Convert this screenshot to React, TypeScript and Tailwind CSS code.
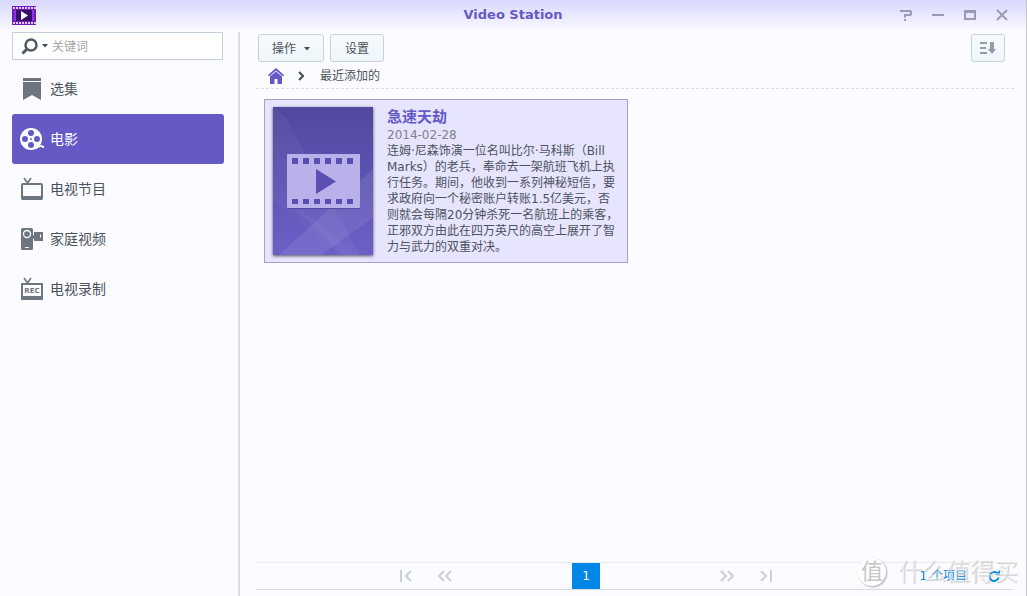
import { useState } from 'react';
import type { ReactNode } from 'react';

const NAV_ITEMS: { id: string; label: string; icon: ReactNode }[] = [
  { id: 'collection', label: '选集', icon: <BookmarkIcon /> },
  { id: 'movie', label: '电影', icon: <ReelIcon /> },
  { id: 'tvshow', label: '电视节目', icon: <TvIcon /> },
  { id: 'home', label: '家庭视频', icon: <CamcorderIcon /> },
  { id: 'record', label: '电视录制', icon: <RecordIcon /> },
];

const MOVIE = {
  title: '急速天劫',
  date: '2014-02-28',
  summary:
    '连姆·尼森饰演一位名叫比尔·马科斯（Bill Marks）的老兵，奉命去一架航班飞机上执行任务。期间，他收到一系列神秘短信，要求政府向一个秘密账户转账1.5亿美元，否则就会每隔20分钟杀死一名航班上的乘客，正邪双方由此在四万英尺的高空上展开了智力与武力的双重对决。',
};

const FILM_HOLES = [0, 1, 2, 3, 4, 5];

const WINDOW_CONTROLS = [
  { label: '帮助', d: 'M1 3V2h9.500l.5 1v2.500L10 6H5v2.500M4 11h2' },
  { label: '最小化', d: 'M0 6h12' },
  { label: '最大化', d: 'M1 2h10v8H1zM1 3h10' },
  { label: '关闭', d: 'M1 1l10 10M11 1L1 11' },
];

function LogoIcon() {
  return (
    <svg width="24" height="20" viewBox="0 0 24 20">
      <rect width="24" height="19" fill="#6d1fb8" />
      <rect x="2" y="4" width="20" height="11" fill="#8b35dc" />
      <rect x="4" y="4" width="16" height="11" fill="#380b6c" />
      {[0, 1, 2, 3, 4, 5, 6, 7].map((i) => (
        <g key={i} fill="#e2c8ff">
          <rect x={1 + i * 3} y="1" width="2" height="2" />
          <rect x={1 + i * 3} y="16" width="2" height="2" />
        </g>
      ))}
      <path d="M9 5v9l7-4.500z" fill="#fff" />
    </svg>
  );
}

function BookmarkIcon() {
  return (
    <svg width="24" height="24" viewBox="0 0 24 24" fill="currentColor">
      <path d="M3 1h18v3H3zM3 5h18v18l-9-5-9 5z" />
    </svg>
  );
}

function ReelIcon() {
  return (
    <svg width="24" height="24" viewBox="0 0 24 24">
      <circle cx="11" cy="12" r="11" fill="#fff" />
      <path d="M15 20l6-2 3 1v2h-2v-1h-2l-4 2z" fill="#fff" />
      <g fill="#6559c6">
        <circle cx="11" cy="6" r="3" />
        <circle cx="11" cy="18" r="3" />
        <circle cx="5" cy="12" r="3" />
        <circle cx="17" cy="12" r="3" />
        <circle cx="11" cy="12" r="1" />
      </g>
    </svg>
  );
}

function TvIcon() {
  return (
    <svg width="24" height="24" viewBox="0 0 24 24" fill="none" stroke="currentColor">
      <path d="M4 1l3.500 5M11 1L7.500 6" strokeWidth="1.600" />
      <rect x="2" y="7" width="20" height="15" rx="1" strokeWidth="2" />
      <path d="M2 21h20" strokeWidth="4" />
    </svg>
  );
}

function CamcorderIcon() {
  return (
    <svg width="24" height="24" viewBox="0 0 24 24">
      <rect x="1" y="1" width="12" height="22" rx="1.500" fill="currentColor" />
      <path d="M12 9l2-1V5h9v9h-9v-2l-2-1z" fill="currentColor" />
      <circle cx="7" cy="7" r="3.500" fill="none" stroke="#fff" strokeWidth="1.300" />
      <path d="M5 20.500h4M20.500 7.500v3" stroke="#fff" />
    </svg>
  );
}

function RecordIcon() {
  return (
    <svg width="24" height="24" viewBox="0 0 24 24">
      <path d="M4 1l3.500 5M11 1L7.500 6" stroke="currentColor" strokeWidth="1.600" />
      <rect x="1" y="6" width="22" height="17" rx="1" fill="currentColor" />
      <rect x="3" y="8" width="18" height="11" fill="#fff" />
      <text
        x="12"
        y="16"
        textAnchor="middle"
        fontSize="7"
        fontWeight="bold"
        fontFamily="DejaVu Sans"
        fill="currentColor"
      >
        REC
      </text>
    </svg>
  );
}

function SearchIcon() {
  return (
    <svg width="17" height="17" viewBox="0 0 17 17" fill="none" stroke="#505b66">
      <circle cx="10" cy="7" r="5.500" strokeWidth="2.500" />
      <path d="M6 11l-4.500 4.500" strokeWidth="3" />
    </svg>
  );
}

function Caret() {
  return (
    <svg width="6" height="4" viewBox="0 0 6 4">
      <path d="M0 0h6L3 3.500z" fill="#414b55" />
    </svg>
  );
}

function HomeIcon() {
  return (
    <svg width="16" height="16" viewBox="0 0 16 16">
      <path d="M8 0l8 7-1 1.500L8 2.500 1 8.500 0 7z" fill="#6559c6" />
      <path d="M8 3.500l6 5V16H9.500v-5h-3v5H2V8.500z" fill="#6559c6" />
    </svg>
  );
}

function SortIcon() {
  return (
    <svg width="16" height="12" viewBox="0 0 16 12" fill="#929daa">
      <path d="M0 0h7v2H0zM0 5h6v2H0zM0 10h7v2H0zM10 0h4v7h2l-4 5-4-5h2z" />
    </svg>
  );
}

function Poster() {
  return (
    <svg width="100" height="148" viewBox="0 0 100 148" className="shrink-0 shadow-[0_1px_3px_#555]">
      <defs>
        <linearGradient id="poster" x1="0" y1="0" x2="0" y2="1">
          <stop offset="0" stopColor="#50489e" />
          <stop offset="1" stopColor="#6c60c8" />
        </linearGradient>
      </defs>
      <rect width="100" height="148" fill="url(#poster)" />
      <path d="M0 0l12 10 75 138H70L0 80z" fill="#fff" opacity=".04" />
      <path d="M100 62v49L48 148H6z" fill="#fff" opacity=".08" />
      <path d="M0 80l85 68H68L0 94z" fill="#fff" opacity=".03" />
      <rect x="14" y="48" width="73" height="54" rx="1" fill="#3c3484" opacity=".5" />
      <rect x="14" y="47" width="73" height="54" rx="1" fill="#bab1ea" />
      {FILM_HOLES.map((i) => (
        <g key={i} fill="#594fae">
          <rect x={19 + i * 11} y="51" width="6" height="6" />
          <rect x={19 + i * 11} y="92" width="6" height="5" />
        </g>
      ))}
      <path d="M43 62v25l20-12.500z" fill="#5b50b2" />
    </svg>
  );
}

function PagerButton({ label, d, width }: { label: string; d: string; width: number }) {
  return (
    <button type="button" aria-label={label} className="flex h-7 w-4 items-center justify-center">
      <svg
        width={width}
        height="12"
        viewBox={`0 0 ${width} 12`}
        className="shrink-0"
        fill="none"
        stroke="#c6d0da"
        strokeWidth="2"
      >
        <path d={d} />
      </svg>
    </button>
  );
}

function WindowControls() {
  return (
    <div className="flex gap-5 pr-1.5 text-[#9a9ab4]">
      {WINDOW_CONTROLS.map(({ label, d }) => (
        <button key={label} type="button" aria-label={label}>
          <svg width="12" height="12" viewBox="0 0 12 12" fill="none" stroke="currentColor" strokeWidth="2">
            <path d={d} />
          </svg>
        </button>
      ))}
    </div>
  );
}

function Watermark() {
  return (
    <div className="pointer-events-none absolute right-2 bottom-2 flex items-center gap-3">
      <span className="flex size-7 items-center justify-center rounded-full bg-white text-[22px] leading-7 text-[#c6c6ca] shadow-[1px_1px_2px_#aaa]">
        值
      </span>
      <span className="text-[24px] leading-8 text-white/50 [text-shadow:1px_1px_1px_#aaaaaa99]">什么值得买</span>
    </div>
  );
}

const BUTTON =
  'flex h-7 items-center justify-center gap-2 rounded-[3px] border border-[#c5d1dc] bg-linear-to-b from-[#f7fafd] to-[#eef6f9] text-xs text-[#4b545e]';

export default function App() {
  const [active, setActive] = useState('movie');
  const [keyword, setKeyword] = useState('');

  return (
    <div className="relative flex min-h-screen flex-col border-r border-[#c4c4ca] bg-[#fcfbff] font-['DejaVu_Sans','Noto_Sans_CJK_SC',sans-serif] text-xs text-[#4b545e]">
      {/* Title bar */}
      <header className="flex h-8 items-center justify-between bg-linear-to-b from-[#d8d7ff] to-[#fcfbff] px-3 pb-0.5">
        <div className="flex-1 pt-0.5">
          <LogoIcon />
        </div>
        <h1 className="text-[13px] font-bold text-[#6559c6]">Video Station</h1>
        <div className="flex flex-1 justify-end">
          <WindowControls />
        </div>
      </header>

      <div className="flex flex-1">
        {/* Sidebar */}
        <aside className="w-60 shrink-0 border-r-2 border-[#dcdce2] pr-3.5 pl-3">
          <label className="mr-px flex h-7 items-center gap-1 border border-[#c5d1dc] bg-white pl-2">
            <SearchIcon />
            <Caret />
            <input
              type="text"
              aria-label="关键词"
              placeholder="关键词"
              value={keyword}
              onChange={(e) => setKeyword(e.target.value)}
              className="min-w-0 flex-1 bg-transparent pt-0.5 text-xs outline-none placeholder:text-[#a6a6a6]"
            />
          </label>
          <nav className="mt-1">
            {NAV_ITEMS.map((item) => (
              <button
                key={item.id}
                type="button"
                onClick={() => setActive(item.id)}
                className={[
                  'flex h-[50px] w-full items-center gap-1.5 rounded-[3px] pl-2 text-sm',
                  active === item.id ? 'bg-[#6559c6] text-white' : 'text-[#4b545e]',
                ].join(' ')}
              >
                <span className={active === item.id ? 'text-white' : 'text-[#6d7680]'}>{item.icon}</span>
                {item.label}
              </button>
            ))}
          </nav>
        </aside>

        {/* Content */}
        <main className="flex min-w-0 flex-1 flex-col pr-3 pl-4">
          <div className="flex justify-between pt-0.5 pr-[9px] pl-0.5">
            <div className="flex gap-1.5">
              <button type="button" className={`${BUTTON} w-[66px] pt-0.5`}>
                操作
                <Caret />
              </button>
              <button type="button" className={`${BUTTON} w-[54px] pt-0.5`}>
                设置
              </button>
            </div>
            <button type="button" aria-label="排序" className={`${BUTTON} w-[34px]`}>
              <SortIcon />
            </button>
          </div>

          <div className="flex h-[27px] items-center border-b border-dashed border-[#d3e0e8] pt-0.5 pl-3">
            <a href="#home" aria-label="首页">
              <HomeIcon />
            </a>
            <svg width="6" height="10" viewBox="0 0 6 10" className="mr-4 ml-3.5 shrink-0">
              <path d="M1 1l4 4-4 4" fill="none" stroke="#414b55" strokeWidth="2" />
            </svg>
            <span>最近添加的</span>
          </div>

          <article className="mt-2.5 ml-2 flex h-[164px] w-[364px] gap-3.5 border border-[#a79dd0] bg-[#e7e4fd] py-[7px] pr-2 pl-2">
            <Poster />
            <div className="min-w-0 flex-1">
              <h2 className="text-[15px] leading-5 font-bold text-[#6559c6]">{MOVIE.title}</h2>
              <div className="leading-4 text-[#7f8288]">{MOVIE.date}</div>
              <p className="leading-4">{MOVIE.summary}</p>
            </div>
          </article>

          {/* Pager */}
          <footer className="mt-auto mb-1.5 flex h-7 items-center border-t border-b border-t-[#e5edf3] border-b-[#d3dfe8]">
            <div className="flex flex-1 justify-end gap-[22px] pr-[120px]">
              <PagerButton label="第一页" width={12} d="M1 0v12M11 1L6 6l5 5" />
              <PagerButton label="上一页" width={16} d="M8 1L3 6l5 5M15 1l-5 5 5 5" />
            </div>
            <button type="button" className="h-[26px] w-7 bg-[#0086e5] text-white">
              1
            </button>
            <div className="flex flex-1 gap-[22px] pl-[120px]">
              <PagerButton label="下一页" width={16} d="M1 1l5 5-5 5M8 1l5 5-5 5" />
              <PagerButton label="最后一页" width={12} d="M1 1l5 5-5 5M11 0v12" />
            </div>
            <div className="flex w-[98px] shrink-0 items-center justify-end">
              <span className="whitespace-nowrap text-[#0086e5]">1 个项目</span>
              <button
                type="button"
                aria-label="刷新"
                className="ml-2 flex h-4 items-center border-l border-[#d3dfe8] pr-3.5 pl-3"
              >
                <svg width="12" height="12" viewBox="0 0 12 12">
                  <path d="M9.500 3.500a4.500 4.500 0 1 0 1 4" fill="none" stroke="#0086e5" strokeWidth="2" />
                  <path d="M7 5h5V0z" fill="#0086e5" />
                </svg>
              </button>
            </div>
          </footer>
        </main>
      </div>

      <Watermark />
    </div>
  );
}
